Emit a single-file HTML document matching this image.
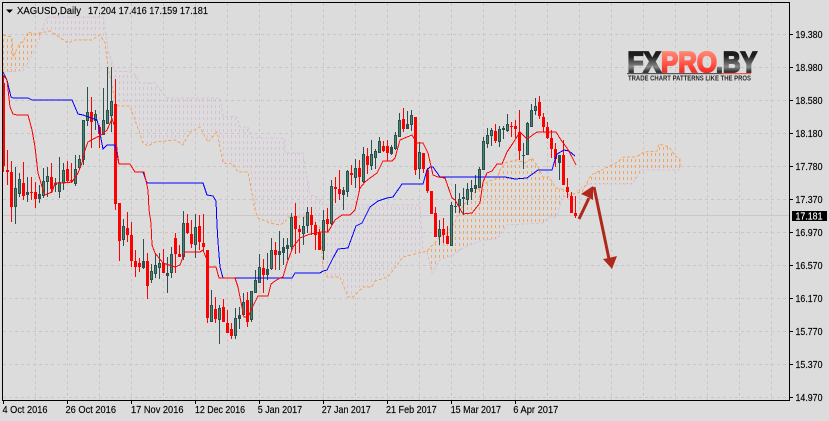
<!DOCTYPE html>
<html><head><meta charset="utf-8"><style>
html,body{margin:0;padding:0;background:#dcdcdc}
svg{display:block}
text{font-family:"Liberation Sans",sans-serif;font-size:10.5px;fill:#000;stroke:#000;stroke-width:.15}
</style></head><body>
<svg width="829" height="421" viewBox="0 0 829 421" xmlns="http://www.w3.org/2000/svg">
<defs>
<clipPath id="co"><polygon points="3,35 12,37 13,57 20,43 23,42 28,32 35,34 41,33 38,43 28,63 23,71 3,72"/><polygon points="427,251 440,237 448,232 455,222 460,210 470,197 480,188 487,182 497,178 500,170 507,162 517,160 525,163 532,158 538,167 543,177 549,177 556,188 566,190 569,195 582,192 591,175 616,163 624,157 636,157 644,152 657,151 659,144 669,147 676,157 680,159 681,168 642,170 632,184 589,184 582,187 571,196 562,197 557,217 549,217 543,223 507,225 497,239 483,240 463,248 453,255 440,260 432,273"/></clipPath>
<clipPath id="ct"><polygon points="41,33 43,28 47,17 103,17 108,50 115,71 133,72 140,83 155,83 167,98 220,98 223,116 237,117 240,127 248,127 252,138 280,138 285,139 285,153 303,153 310,195 318,197 323,205 420,205 423,252 427,251 403,257 388,277 375,281 372,287 363,287 353,297 348,297 340,277 327,277 323,267 320,228 307,217 288,217 285,222 280,225 270,223 258,218 255,210 248,172 238,172 233,164 223,163 217,132 208,142 200,127 190,132 183,145 175,140 155,142 148,146 143,143 130,106 118,106 115,100 108,67 105,43 100,35 92,40 75,40 68,43 50,31"/></clipPath>
<linearGradient id="lk" x1="0" y1="0" x2="0" y2="1"><stop offset="0" stop-color="#111"/><stop offset=".3" stop-color="#222"/><stop offset=".62" stop-color="#888"/><stop offset=".8" stop-color="#222"/><stop offset="1" stop-color="#111"/></linearGradient>
<linearGradient id="lr" x1="0" y1="0" x2="0" y2="1"><stop offset="0" stop-color="#ff9a88"/><stop offset=".5" stop-color="#ff5a4a"/><stop offset="1" stop-color="#e80a0a"/></linearGradient>
<filter id="bl"><feGaussianBlur stdDeviation="0.35"/></filter>
<path id="rows" d="M3 16.500H682M3 22.500H682M3 28.500H682M3 34.500H682M3 40.500H682M3 46.500H682M3 52.500H682M3 58.500H682M3 64.500H682M3 70.500H682M3 76.500H682M3 82.500H682M3 88.500H682M3 94.500H682M3 100.500H682M3 106.500H682M3 112.500H682M3 118.500H682M3 124.500H682M3 130.500H682M3 136.500H682M3 142.500H682M3 148.500H682M3 154.500H682M3 160.500H682M3 166.500H682M3 172.500H682M3 178.500H682M3 184.500H682M3 190.500H682M3 196.500H682M3 202.500H682M3 208.500H682M3 214.500H682M3 220.500H682M3 226.500H682M3 232.500H682M3 238.500H682M3 244.500H682M3 250.500H682M3 256.500H682M3 262.500H682M3 268.500H682M3 274.500H682M3 280.500H682M3 286.500H682M3 292.500H682"/>
</defs>
<rect width="829" height="421" fill="#dcdcdc"/>
<g shape-rendering="crispEdges">
<path fill="none" stroke="#c9c6c6" stroke-dasharray="3 3" d="M35.5 3V400M67.5 3V400M99.5 3V400M131.5 3V400M163.5 3V400M195.5 3V400M227.5 3V400M259.5 3V400M291.5 3V400M323.5 3V400M355.5 3V400M387.5 3V400M419.5 3V400M451.5 3V400M483.5 3V400M515.5 3V400M547.5 3V400M579.5 3V400M611.5 3V400M643.5 3V400M675.5 3V400M707.5 3V400M739.5 3V400M771.5 3V400M3 34.5H789M3 67.5H789M3 100.5H789M3 133.5H789M3 166.5H789M3 199.5H789M3 232.5H789M3 265.5H789M3 298.5H789M3 331.5H789M3 364.5H789M3 397.5H789"/>
<path d="M3 215.5H789" stroke="#c8c8c8" fill="none"/>

<g clip-path="url(#co)"><use href="#rows" fill="none" stroke="#f4a460" stroke-width="3" stroke-dasharray="1 3"/></g>
<g clip-path="url(#ct)"><use href="#rows" fill="none" stroke="#d8bfd8" stroke-width="3" stroke-dasharray="1 3"/></g>
<polyline fill="none" stroke="#d8bfd8" stroke-dasharray="3 2" points="3,72 23,71 28,63 38,43 43,28 47,17 103,17 108,50 115,71 133,72 140,83 155,83 167,98 220,98 223,116 237,117 240,127 248,127 252,138 280,138 285,139 285,153 303,153 310,195 318,197 323,205 420,205 423,252 427,252 432,273 440,260 453,255 463,248 483,240 497,239 507,225 543,223 549,217 557,217 562,197 571,196 582,187 589,184 632,184 642,170 679,170"/>
<polyline fill="none" stroke="#f4a460" stroke-dasharray="3 2" points="3,35 12,37 13,57 20,43 23,42 28,32 35,34 50,31 68,43 75,40 92,40 100,35 105,43 108,67 115,100 118,106 130,106 143,143 148,146 155,142 175,140 183,145 190,132 200,127 208,142 217,132 223,163 233,164 238,172 248,172 255,210 258,218 270,223 280,225 285,222 288,217 307,217 320,228 323,267 327,277 340,277 348,297 353,297 363,287 372,287 375,281 388,277 403,257 427,251 440,237 448,232 455,222 460,210 470,197 480,188 487,182 497,178 500,170 507,162 517,160 525,163 532,158 538,167 543,177 549,177 556,188 566,190 569,195 582,192 591,175 616,163 624,157 636,157 644,152 657,151 659,144 669,147 676,157 680,159 680,168"/>

<path fill="none" stroke="#2f4f4f" d="M15.5 167V224M19.5 173V197M27.5 177V202M39.5 185V203M43.5 168V198M47.5 167V197M55.5 178V192M59.5 157V198M63.5 163V190M75.5 155V186M79.5 155V170M83.5 120V165M87.5 87V126M95.5 110V130M103.5 88V135M107.5 67V120M111.5 67V132M123.5 219V246M143.5 239V269M151.5 264V283M155.5 254V278M159.5 253V279M167.5 257V293M171.5 247V278M183.5 211V260M195.5 214V258M211.5 290V322M219.5 305V344M235.5 308V339M239.5 307V329M243.5 293V315M251.5 291V322M255.5 270V293M259.5 254V283M267.5 253V280M271.5 238V270M279.5 231V270M283.5 238V265M287.5 238V260M291.5 213V250M303.5 217V245M307.5 207V233M323.5 210V260M331.5 180V225M343.5 187V210M347.5 170V197M355.5 159V188M363.5 147V183M371.5 140V170M375.5 149V169M379.5 137V153M391.5 145V155M395.5 132V150M399.5 113V137M407.5 111V129M411.5 110V131M419.5 142V179M439.5 220V245M451.5 202V246M455.5 184V213M459.5 193V213M463.5 188V215M467.5 183V205M471.5 180V200M475.5 175V193M479.5 167V188M483.5 137V170M487.5 128V148M491.5 128V146M499.5 126V147M503.5 126V139M507.5 114V132M523.5 143V169M527.5 122V155M531.5 104V127M535.5 98V115M559.5 155V180"/>
<path fill="none" stroke="#2f4f4f" stroke-width="3" d="M15.5 188V207M19.5 179V194M27.5 192V195M39.5 194V199M43.5 181V196M47.5 176V182M55.5 183V185M59.5 182V192M63.5 170V183M75.5 169V184M79.5 159V168M83.5 120V160M87.5 112V121M95.5 114V121M103.5 120V135M107.5 110V124M111.5 101V116M123.5 226V240M143.5 261V268M151.5 271V280M155.5 265V274M159.5 263V268M167.5 273V276M171.5 254V273M183.5 223V257M195.5 227V245M211.5 305V322M219.5 308V320M235.5 318V336M239.5 315V319M243.5 302V315M251.5 291V320M255.5 280V293M259.5 267V283M267.5 269V275M271.5 250V269M279.5 251V255M283.5 247V253M287.5 245V249M291.5 217V247M303.5 226V234M307.5 212V226M323.5 220V251M331.5 186V224M343.5 190V195M347.5 171V192M355.5 168V178M363.5 154V182M371.5 154V166M375.5 151V158M379.5 141V153M391.5 147V154M395.5 135V149M399.5 120V137M407.5 124V129M411.5 115V125M419.5 152V169M439.5 229V237M451.5 205V246M455.5 206V207M459.5 199V206M463.5 197V199M467.5 189V200M471.5 188V192M475.5 185V189M479.5 169V188M483.5 141V170M487.5 135V144M491.5 130V136M499.5 129V142M503.5 128V130M507.5 124V131M523.5 155V156M527.5 123V155M531.5 110V127M535.5 106V111M559.5 155V163"/>
<path fill="none" stroke="#3f8a6c" d="M15.5 189V206M19.5 180V193M43.5 182V195M47.5 177V181M59.5 183V191M63.5 171V182M75.5 170V183M79.5 160V167M83.5 121V159M87.5 113V120M95.5 115V120M103.5 121V134M107.5 111V123M111.5 102V115M123.5 227V239M151.5 272V279M155.5 266V273M159.5 264V267M171.5 255V272M183.5 224V256M195.5 228V244M211.5 306V321M219.5 309V319M235.5 319V335M243.5 303V314M251.5 292V319M255.5 281V292M259.5 268V282M271.5 251V268M291.5 218V246M303.5 227V233M307.5 213V225M323.5 221V250M331.5 187V223M347.5 172V191M355.5 169V177M363.5 155V181M371.5 155V165M375.5 152V157M379.5 142V152M395.5 136V148M399.5 121V136M411.5 116V124M419.5 153V168M439.5 230V236M451.5 206V245M459.5 200V205M467.5 190V199M479.5 170V187M483.5 142V169M487.5 136V143M491.5 131V135M499.5 130V141M507.5 125V130M527.5 124V154M531.5 111V126M535.5 107V110"/>
<path fill="none" stroke="#f00" d="M3.5 76V172M7.5 150V185M11.5 161V222M23.5 162V200M31.5 177V200M35.5 182V208M51.5 163V193M67.5 161V182M71.5 163V183M91.5 97V148M99.5 125V148M115.5 79V210M119.5 203V261M127.5 212V242M131.5 222V267M135.5 250V277M139.5 258V272M147.5 253V299M163.5 249V273M175.5 233V273M179.5 245V257M187.5 214V234M191.5 220V248M199.5 215V250M203.5 214V252M207.5 250V323M215.5 297V323M223.5 299V322M227.5 310V333M231.5 323V339M247.5 292V327M263.5 259V293M275.5 242V270M295.5 203V254M299.5 225V253M311.5 207V235M315.5 222V250M319.5 229V250M327.5 208V232M335.5 177V203M339.5 170V200M351.5 165V185M359.5 160V190M367.5 148V174M383.5 141V152M387.5 140V161M403.5 108V132M415.5 117V175M423.5 153V173M427.5 168V193M431.5 191V214M435.5 207V237M443.5 218V243M447.5 226V244M495.5 124V143M511.5 122V137M515.5 120V138M519.5 110V160M539.5 96V119M543.5 113V132M547.5 122V139M551.5 130V158M555.5 143V167M563.5 140V185M567.5 178V198M571.5 192V213M575.5 196V218"/>
<path fill="none" stroke="#f00" stroke-width="3" d="M3.5 83V166M7.5 170V172M11.5 172V207M23.5 183V196M31.5 192V193M35.5 192V199M51.5 177V189M67.5 169V181M71.5 180V181M91.5 112V122M99.5 127V134M115.5 104V204M119.5 203V241M127.5 228V235M131.5 235V261M135.5 261V267M139.5 263V267M147.5 261V286M163.5 263V273M175.5 238V254M179.5 254V257M187.5 223V233M191.5 234V244M199.5 226V242M203.5 243V247M207.5 250V318M215.5 309V319M223.5 307V322M227.5 323V333M231.5 329V336M247.5 300V322M263.5 268V275M275.5 250V255M295.5 216V229M299.5 229V232M311.5 215V225M315.5 225V235M319.5 233V250M327.5 219V224M335.5 187V189M339.5 189V194M351.5 173V175M359.5 168V177M367.5 156V165M383.5 146V151M387.5 146V153M403.5 119V129M415.5 117V170M423.5 153V169M427.5 170V191M431.5 191V214M435.5 213V237M443.5 229V235M447.5 236V244M495.5 131V141M511.5 126V127M515.5 126V129M519.5 132V151M539.5 102V116M543.5 117V127M547.5 127V138M551.5 138V149M555.5 149V159M563.5 155V185M567.5 187V192M571.5 196V213M575.5 213V216"/>

<polyline fill="none" stroke="#00f" stroke-width="1" points="3,72 7,80 11,97 13,98 28,98 32,100 72,100 78,114 83,115 97,120 99,128 103,149 107,145 115,145 119,164 130,164 135,172 143,172 147,183 203,183 207,195 213,196 216,201 217,225 218,242 220,267 223,278 292,278 295,273 320,273 323,271 327,270 333,258 338,249 348,248 356,226 362,223 370,207 378,201 387,198 393,197 402,184 423,184 427,170 430,167 433,167 440,177 505,177 515,179 527,178 538,170 552,170 554,163 557,154 564,150 569,151 575,156"/>
<polyline fill="none" stroke="#f00" stroke-width="1" points="3,75 7,80 10,107 13,114 17,115 28,115 32,130 35,147 38,173 43,190 45,195 52,192 55,183 63,183 72,182 78,173 82,163 85,150 88,142 97,137 100,136 107,130 112,119 115,127 117,150 119,164 130,164 135,172 144,172 148,190 149,210 151,223 152,245 155,253 163,263 175,267 180,265 183,257 185,252 200,252 203,250 207,260 208,267 216,267 219,278 235,278 238,287 242,307 244,317 248,317 253,306 258,296 268,296 271,284 275,281 280,278 283,277 287,263 293,247 300,238 310,234 322,232 328,232 335,220 342,215 350,215 355,210 360,188 365,182 370,178 377,173 383,161 392,161 395,158 400,140 407,137 412,135 417,143 423,143 428,153 433,175 438,177 445,178 452,198 455,200 463,214 472,213 480,203 483,182 487,173 492,171 497,164 502,164 507,152 513,143 520,132 527,139 537,132 556,132 561,140 567,148 572,157 576,165"/>

<path fill="none" stroke="#000" d="M2.5 2V400.5M2 2.5H789.5M789.5 2V400.5M2 400.5H790"/>
<path fill="none" stroke="#000" d="M789 34.5h4M789 67.5h4M789 100.5h4M789 133.5h4M789 166.5h4M789 199.5h4M789 232.5h4M789 265.5h4M789 298.5h4M789 331.5h4M789 364.5h4M789 397.5h4M3.5 400v4M67.5 400v4M131.5 400v4M195.5 400v4M259.5 400v4M323.5 400v4M387.5 400v4M451.5 400v4M515.5 400v4"/>
<rect x="792" y="211" width="35" height="10" fill="#000"/>
</g>

<polygon points="6,9.5 13,9.5 9.5,13" fill="#000"/>
<text x="17" y="14" textLength="64" lengthAdjust="spacingAndGlyphs">XAGUSD,Daily</text>
<text x="88" y="14" textLength="120" lengthAdjust="spacingAndGlyphs">17.204 17.416 17.159 17.181</text>

<g>
<text x="795.5" y="38" textLength="27" lengthAdjust="spacingAndGlyphs">19.380</text>
<text x="795.5" y="71" textLength="27" lengthAdjust="spacingAndGlyphs">18.980</text>
<text x="795.5" y="104" textLength="27" lengthAdjust="spacingAndGlyphs">18.580</text>
<text x="795.5" y="137" textLength="27" lengthAdjust="spacingAndGlyphs">18.180</text>
<text x="795.5" y="170" textLength="27" lengthAdjust="spacingAndGlyphs">17.780</text>
<text x="795.5" y="203" textLength="27" lengthAdjust="spacingAndGlyphs">17.370</text>
<text x="795.5" y="219.5" textLength="27" lengthAdjust="spacingAndGlyphs" style="fill:#fff;stroke:#fff">17.181</text>
<text x="795.5" y="236" textLength="27" lengthAdjust="spacingAndGlyphs">16.970</text>
<text x="795.5" y="269" textLength="27" lengthAdjust="spacingAndGlyphs">16.570</text>
<text x="795.5" y="302" textLength="27" lengthAdjust="spacingAndGlyphs">16.170</text>
<text x="795.5" y="335" textLength="27" lengthAdjust="spacingAndGlyphs">15.770</text>
<text x="795.5" y="368" textLength="27" lengthAdjust="spacingAndGlyphs">15.370</text>
<text x="795.5" y="401" textLength="27" lengthAdjust="spacingAndGlyphs">14.970</text>
</g>
<g>
<text x="2.5" y="413" textLength="45" lengthAdjust="spacingAndGlyphs">4 Oct 2016</text>
<text x="65.5" y="413" textLength="50.5" lengthAdjust="spacingAndGlyphs">26 Oct 2016</text>
<text x="131" y="413" textLength="52.5" lengthAdjust="spacingAndGlyphs">17 Nov 2016</text>
<text x="195" y="413" textLength="50" lengthAdjust="spacingAndGlyphs">12 Dec 2016</text>
<text x="257.7" y="413" textLength="44.5" lengthAdjust="spacingAndGlyphs">5 Jan 2017</text>
<text x="321.7" y="413" textLength="49" lengthAdjust="spacingAndGlyphs">27 Jan 2017</text>
<text x="386" y="413" textLength="50.7" lengthAdjust="spacingAndGlyphs">21 Feb 2017</text>
<text x="450.7" y="413" textLength="50.3" lengthAdjust="spacingAndGlyphs">15 Mar 2017</text>
<text x="513.3" y="413" textLength="45" lengthAdjust="spacingAndGlyphs">6 Apr 2017</text>
</g>

<g fill="#b0281c" stroke="none">
<path d="M579 219L589 198" stroke="#b0281c" stroke-width="3" fill="none"/>
<polygon points="581,194 593,186 593,200 588,197"/>
<path d="M594 187L609 259" stroke="#b0281c" stroke-width="3" fill="none"/>
<polygon points="603,259 609,258 617,256 612,269"/>
</g>

<g filter="url(#bl)">
<text x="627.5" y="72" textLength="33.5" lengthAdjust="spacingAndGlyphs" style="font-size:29px;font-weight:bold;fill:url(#lk);stroke:url(#lk);stroke-width:1.8">FX</text>
<text x="661" y="72" textLength="56" lengthAdjust="spacingAndGlyphs" style="font-size:29px;font-weight:bold;fill:url(#lr);stroke:url(#lr);stroke-width:1.8">PRO</text>
<text x="716" y="72" textLength="41" lengthAdjust="spacingAndGlyphs" style="font-size:29px;font-weight:bold;fill:url(#lk);stroke:url(#lk);stroke-width:1.8">.BY</text>
<rect x="627" y="73" width="95" height="1.2" fill="#555"/>
<rect x="722" y="73" width="29" height="1.2" fill="#f05a50"/>
<text x="628" y="80.5" textLength="123" lengthAdjust="spacingAndGlyphs" style="font-size:7px;font-weight:bold;fill:#2a2a2a;stroke:none">TRADE CHART PATTERNS LIKE THE PROS</text>
</g>
</svg>
</body></html>
